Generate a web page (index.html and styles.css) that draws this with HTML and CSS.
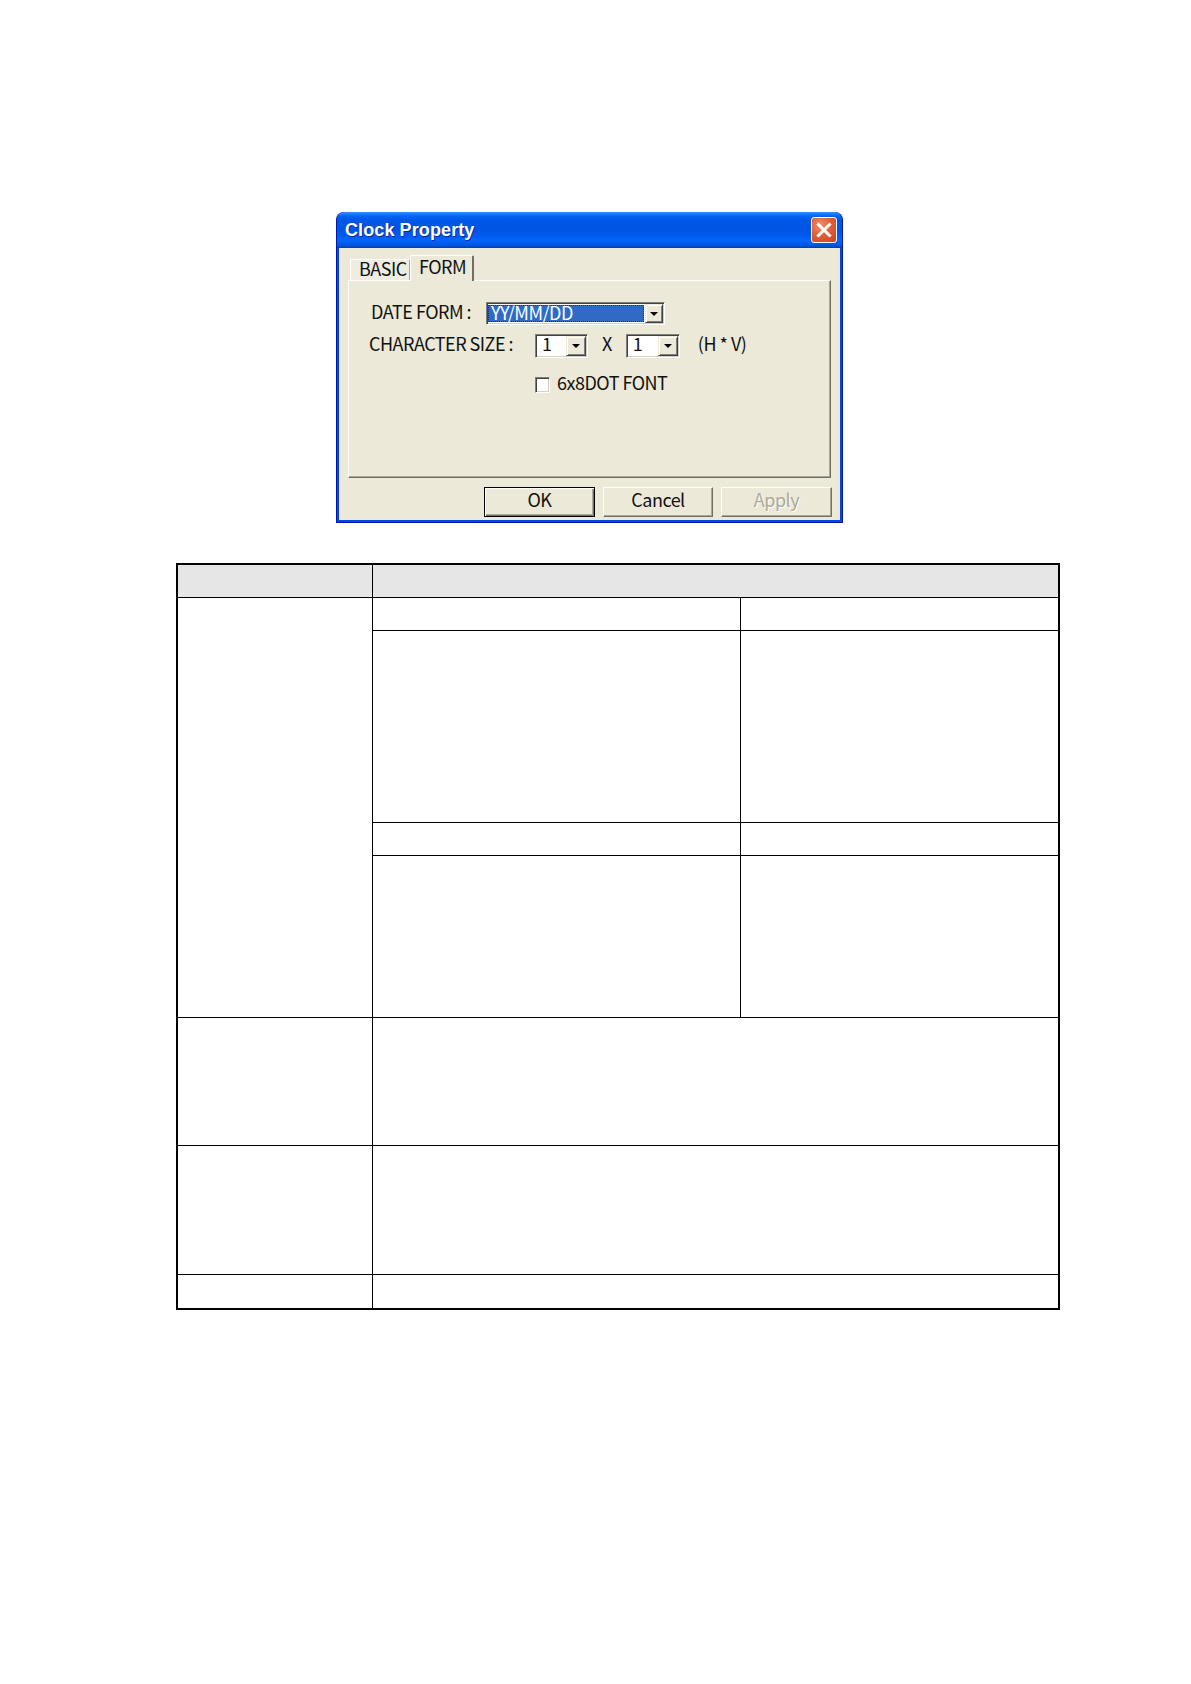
FILE: index.html
```html
<!DOCTYPE html>
<html lang="en">
<head>
<meta charset="utf-8">
<title>Clock Property</title>
<link rel="stylesheet" href="styles.css">
</head>
<body>
<div class="page">
  <div class="dialog">
    <div class="titlebar">
      <span class="title">Clock Property</span>
      <span class="close">
        <svg width="24" height="24" viewBox="0 0 24 24"><path d="M6.5 6.5 L17.5 17.5 M17.5 6.5 L6.5 17.5" stroke="#fff" stroke-width="3" stroke-linecap="square" fill="none"/></svg>
      </span>
    </div>
    <div class="body">
      <div class="tabs">
        <div class="tab">BASIC</div>
        <div class="tab active">FORM</div>
      </div>
      <div class="panel">
        <div class="row row-date">
          <span class="lbl lbl-date">DATE FORM :</span>
          <div class="combo combo-date">
            <span class="ctext sel">YY/MM/DD</span>
            <span class="cbtn"><i class="arrow"></i></span>
          </div>
        </div>
        <div class="row row-size">
          <span class="lbl lbl-size">CHARACTER SIZE :</span>
          <div class="combo combo-small">
            <span class="ctext">1</span>
            <span class="cbtn"><i class="arrow"></i></span>
          </div>
          <span class="lbl times">X</span>
          <div class="combo combo-small2">
            <span class="ctext">1</span>
            <span class="cbtn"><i class="arrow"></i></span>
          </div>
          <span class="lbl hv">(H * V)</span>
        </div>
        <div class="row row-check">
          <span class="checkbox"></span>
          <span class="lbl chk-lbl">6x8DOT FONT</span>
        </div>
      </div>
      <div class="buttons">
        <div class="btn default">OK</div>
        <div class="btn cancel">Cancel</div>
        <div class="btn disabled">Apply</div>
      </div>
    </div>
  </div>

  <div class="grid">
    <div class="cell head"></div>
    <div class="cell head span2"></div>
    <div class="cell tall"></div>
    <div class="cell"></div>
    <div class="cell"></div>
    <div class="cell"></div>
    <div class="cell"></div>
    <div class="cell"></div>
    <div class="cell"></div>
    <div class="cell"></div>
    <div class="cell"></div>
    <div class="cell"></div>
    <div class="cell span2"></div>
    <div class="cell"></div>
    <div class="cell span2"></div>
    <div class="cell"></div>
    <div class="cell span2"></div>
  </div>
</div>
</body>
</html>
```

FILE: styles.css
```css
* { box-sizing: border-box; }

body {
  margin: 0;
  background: #fff;
}

.page {
  padding-top: 212px;
  font-family: "Noto Sans CJK KR", "Liberation Sans", sans-serif;
  font-size: 18px;
  letter-spacing: -0.5px;
  color: #111;
}

/* ---------- dialog ---------- */
.dialog {
  margin-left: 336px;
  width: 507px;
  height: 311px;
  display: flex;
  flex-direction: column;
  background: #0843DA;
  border: 1px solid #0019A8;
  border-top: none;
  border-radius: 8px 8px 0 0;
  overflow: hidden;
}

.titlebar {
  flex: none;
  height: 36px;
  display: flex;
  align-items: center;
  justify-content: space-between;
  padding: 0 5px 0 8px;
  background: linear-gradient(#3D8EFF 0%, #167BFF 6%, #0463F2 12%, #0057E5 22%, #0054E3 50%, #005AF2 66%, #0365FB 78%, #005BEC 88%, #0050D4 95%, #003CA8 100%);
}

.title {
  font-family: "Liberation Sans", Arial, sans-serif;
  font-weight: bold;
  font-size: 18px;
  letter-spacing: 0.1px;
  color: #fff;
  text-shadow: 1px 1px 0 #0A2A9A;
}

.close {
  width: 26px;
  height: 26px;
  display: flex;
  align-items: center;
  justify-content: center;
  border: 1px solid #fff;
  border-radius: 3px;
  background: radial-gradient(circle at 35% 30%, #F0916C 0%, #E0603A 45%, #C9421D 100%);
}

.body {
  flex: 1;
  margin: 0 2px 2px;
  background: #ECE9D8;
  padding-top: 7px;
  display: flex;
  flex-direction: column;
}

/* ---------- tabs ---------- */
.tabs {
  height: 25px;
  display: flex;
  align-items: flex-end;
  padding-left: 11px;
  position: relative;
  z-index: 1;
}

.tab {
  width: 60px;
  height: 21px;
  padding-left: 8px;
  line-height: 17px;
  background: #EFEDE2;
  border-top: 1px solid #fff;
  border-left: 1px solid #fff;
  border-right: 1px solid #ACA899;
  border-radius: 2px 2px 0 0;
}

.tab.active {
  width: 64px;
  height: 26px;
  margin-bottom: -1px;
  padding-left: 8px;
  line-height: 20px;
  background: #ECE9D8;
  border-right: 2px solid #716F64;
}

.panel {
  margin-left: 9px;
  width: 483px;
  height: 198px;
  padding-top: 21px;
  border-top: 1px solid #fff;
  border-left: 1px solid #fff;
  border-right: 1px solid #716F64;
  border-bottom: 1px solid #716F64;
  box-shadow: inset -1px -1px 0 #ACA899;
}

/* ---------- rows ---------- */
.row {
  display: flex;
  align-items: center;
  line-height: 20px;
}

.lbl { padding-bottom: 6px; }

.row-date { height: 23px; padding-left: 22px; }
.lbl-date { width: 115px; flex: none; }

.row-size { height: 24px; margin-top: 9px; padding-left: 20px; }
.lbl-size { width: 166px; flex: none; }

.row-check { height: 16px; margin-top: 19px; padding-left: 186px; }

/* ---------- combo ---------- */
.combo {
  display: flex;
  height: 100%;
  padding: 1px;
  background: #fff;
  border: 1px solid;
  border-color: #808080 #fff #fff #808080;
  box-shadow: inset 1px 1px 0 #404040, inset -1px -1px 0 #D4D0C8;
}

.combo-date { width: 179px; }
.combo-small { width: 53px; }
.combo-small2 { width: 54px; }

.ctext {
  flex: 1;
  padding-left: 5px;
  line-height: 14px;
}

.ctext.sel {
  margin: 1px 1px 1px 0;
  padding-left: 2px;
  line-height: 13px;
  color: #fff;
  background: #316AC5;
  border: 1px dotted #27324A;
}

.cbtn {
  width: 18px;
  flex: none;
  display: flex;
  align-items: center;
  justify-content: center;
  background: #ECE9D8;
  border: 1px solid;
  border-color: #ECE9D8 #404040 #404040 #ECE9D8;
  box-shadow: inset 1px 1px 0 #fff, inset -1px -1px 0 #808080;
}

.combo-small .cbtn,
.combo-small2 .cbtn { width: 20px; }

.arrow {
  width: 0;
  height: 0;
  border-left: 4px solid transparent;
  border-right: 4px solid transparent;
  border-top: 4px solid #000;
}

.times { margin: 0 14px; }
.hv { margin-left: 18px; }

/* ---------- checkbox ---------- */
.checkbox {
  width: 15px;
  height: 16px;
  flex: none;
  background: #fff;
  border: 1px solid;
  border-color: #808080 #fff #fff #808080;
  box-shadow: inset 1px 1px 0 #404040, inset -1px -1px 0 #D4D0C8;
}

.chk-lbl { margin-left: 7px; }

/* ---------- buttons ---------- */
.buttons {
  display: flex;
  justify-content: flex-end;
  gap: 8px;
  margin-top: 9px;
  padding-right: 8px;
}

.btn {
  width: 111px;
  height: 30px;
  display: flex;
  align-items: center;
  justify-content: center;
  padding-bottom: 6px;
  line-height: 20px;
  background: #ECE9D8;
  border: 1px solid;
  border-color: #fff #716F64 #716F64 #fff;
  box-shadow: inset -1px -1px 0 #ACA899;
}

.btn.cancel { width: 110px; }

.btn.default {
  border-color: #000;
  box-shadow: inset 1px 1px 0 #fff, inset -1px -1px 0 #716F64, inset -2px -2px 0 #ACA899;
}

.btn.disabled {
  color: #ACA899;
  text-shadow: 1px 1px 0 #fff;
}

/* ---------- table ---------- */
.grid {
  margin: 40px 0 0 176px;
  width: 884px;
  display: grid;
  grid-template-columns: 194px 367px 317px;
  grid-template-rows: 32px 32px 191px 32px 161px 127px 128px 33px;
  gap: 1px;
  background: #000;
  border: 2px solid #000;
}

.cell { background: #fff; }
.cell.head { background: #E6E6E6; }
.cell.span2 { grid-column: span 2; }
.cell.tall { grid-row: span 4; }
```
